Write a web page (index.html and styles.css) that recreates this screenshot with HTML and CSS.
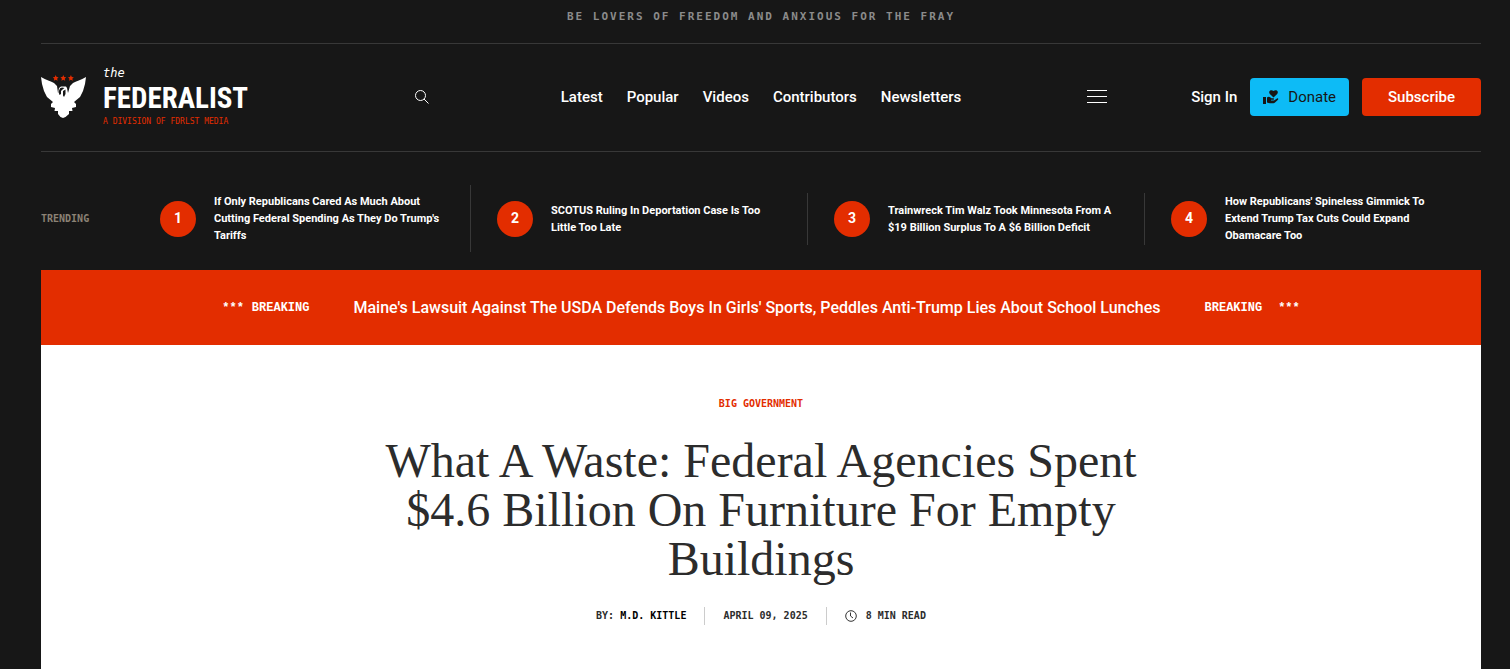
FILE: index.html
```html
<!DOCTYPE html>
<html lang="en">
<head>
<meta charset="utf-8">
<meta name="viewport" content="width=device-width, initial-scale=1">
<title>What A Waste: Federal Agencies Spent $4.6 Billion On Furniture For Empty Buildings</title>
<link rel="stylesheet" href="styles.css">
</head>
<body>
<div class="page">
  <header>
    <p class="tagline">Be lovers of freedom and anxious for the fray</p>
    <div class="masthead">
      <a class="logo" href="#">
        <svg class="logo-eagle" viewBox="0 0 45 46" aria-hidden="true">
          <path fill="#fff" d="M0 3C5 6 10 7 13 9L16 12 17 19 18 14 20 12.500H25L26 14 27 19 29 12 32 9C35 7 40 6 45 3L44 10 42 17 39 23 33 28 35 30V33L31 34 31.500 37 28 37 28 40 24.500 43 22 44 19.500 43 17 40V37H13.500L14 34 10 33V30L12 28 6 23 3 17 1 10Z"/>
          <path fill="#171717" d="M17.500 18 19 14.200 21 13.500 23.500 14 21.500 15.500 20 17 20 20 18.500 21ZM22 17 24.500 15.500 24.500 20 23 23 22 21.500Z"/>
          <path fill="#e32d00" d="m14.700 1 .9 2 2 .2-1.500 1.500.5 2.100-1.900-1.100-1.900 1.100.5-2.100-1.500-1.500 2-.2ZM22.300 1l.9 2 2 .2-1.500 1.500.5 2.100-1.900-1.100-1.900 1.100.5-2.100-1.500-1.500 2-.2ZM29.900 1l.9 2 2 .2-1.500 1.500.5 2.100-1.900-1.100L28 6.800l.5-2.100L27 3.200l2-.2Z"/>
        </svg>
        <span class="logo-words">
          <span class="logo-the">the</span>
          <span class="logo-name">FEDERALIST</span>
          <span class="logo-sub">A DIVISION OF FDRLST MEDIA</span>
        </span>
      </a>
      <div class="masthead-middle">
        <button class="icon-button" aria-label="Search">
          <svg width="14" height="14" viewBox="0 0 14 14" fill="none" stroke="#fff" aria-hidden="true"><circle cx="5.500" cy="5.500" r="5"/><path d="m9 9 4.500 4.500"/></svg>
        </button>
        <nav class="nav">
          <a href="#">Latest</a>
          <a href="#">Popular</a>
          <a href="#">Videos</a>
          <a href="#">Contributors</a>
          <a href="#">Newsletters</a>
        </nav>
        <button class="icon-button" aria-label="Menu">
          <svg width="20" height="13" viewBox="0 0 20 13" fill="#fff" aria-hidden="true"><path d="M0 0h20v1H0ZM0 6h20v1H0ZM0 12h20v1H0Z"/></svg>
        </button>
      </div>
      <div class="account">
        <a class="sign-in" href="#">Sign In</a>
        <a class="button donate" href="#">
          <svg width="16" height="14" viewBox="0 0 16 14" fill="#171717" aria-hidden="true"><path d="M10.500 7.500 6.800 3.900C5.800 2.900 6 1.200 7.200.5c1-.6 2.300-.4 3.300.6 1-1 2.300-1.200 3.300-.6 1.200.7 1.400 2.400.4 3.400ZM0 7h3v7H0ZM4 7.500c1-1 2.500-1 3.500 0l1 .8h1.800c1 0 1 1.500 0 1.500H8v.6h3l3-1.900c.9-.6 1.700.4 1 1.200l-3 2.900c-.4.4-1 .6-1.500.6H7c-1 0-2-.3-3-.8Z"/></svg>
          Donate
        </a>
        <a class="button subscribe" href="#">Subscribe</a>
      </div>
    </div>
    <section class="trending" aria-labelledby="trending-label">
      <h2 class="trending-label" id="trending-label">Trending</h2>
      <a class="trend trend-first" href="#"><span class="trend-number">1</span><span>If Only Republicans Cared As Much About Cutting Federal Spending As They Do Trump's Tariffs</span></a>
      <a class="trend" href="#"><span class="trend-number">2</span><span>SCOTUS Ruling In Deportation Case Is Too Little Too Late</span></a>
      <a class="trend" href="#"><span class="trend-number">3</span><span>Trainwreck Tim Walz Took Minnesota From A $19 Billion Surplus To A $6 Billion Deficit</span></a>
      <a class="trend" href="#"><span class="trend-number">4</span><span>How Republicans' Spineless Gimmick To Extend Trump Tax Cuts Could Expand Obamacare Too</span></a>
    </section>
  </header>
  <a class="breaking" href="#">
    <span class="breaking-flag"><span>***</span><span>Breaking</span></span>
    <span class="breaking-title">Maine's Lawsuit Against The USDA Defends Boys In Girls' Sports, Peddles Anti-Trump Lies About School Lunches</span>
    <span class="breaking-flag breaking-flag-end"><span>Breaking</span><span>***</span></span>
  </a>
  <main class="article">
    <a class="category" href="#">Big Government</a>
    <h1 class="title">What A Waste: Federal Agencies Spent $4.6 Billion On Furniture For Empty Buildings</h1>
    <div class="meta">
      <span class="meta-item">By: <a class="author" href="#">M.D. Kittle</a></span>
      <time class="meta-item" datetime="2025-04-09">April 09, 2025</time>
      <span class="meta-item meta-read">
        <svg width="12" height="12" viewBox="0 0 12 12" fill="none" stroke="#333" aria-hidden="true"><circle cx="6" cy="6" r="5.300"/><path d="M5.500 2.500V6l2.500 2"/></svg>
        8 min read
      </span>
    </div>
  </main>
</div>
</body>
</html>
```
FILE: styles.css
```css
* { box-sizing: border-box; }

body {
  margin: 0;
  background: #171717;
  color: #fff;
  font-family: Roboto, "Liberation Sans", sans-serif;
}

a { color: inherit; text-decoration: none; }

.page {
  display: flex;
  flex-direction: column;
  min-height: 100vh;
  padding: 0 29px 0 41px;
}

.tagline {
  margin: 0;
  padding: 9px 0 18px;
  border-bottom: 1px solid #383838;
  color: #8b8b8b;
  font: bold 11px/16px "DejaVu Sans Mono", monospace;
  letter-spacing: 2px;
  text-align: center;
  text-transform: uppercase;
}

.masthead {
  display: grid;
  grid-template-columns: 26% 1fr 26%;
  align-items: center;
  min-height: 108px;
  padding-bottom: 2px;
  border-bottom: 1px solid #383838;
}

.logo { display: flex; align-items: center; gap: 17px; }
.logo-eagle { width: 45px; height: 46px; }
.logo-words { display: flex; flex-direction: column; }
.logo-the { font: italic 12px/14px "DejaVu Sans Mono", monospace; }
.logo-name { font: bold 29px/36px "Liberation Sans Narrow", "Roboto Condensed", sans-serif; }
.logo-sub { color: #e32d00; font: 8px/12px "DejaVu Sans Mono", monospace; }

.masthead-middle { display: flex; align-items: center; justify-content: space-between; }
.icon-button {
  display: flex;
  min-width: 20px;
  padding: 0;
  border: 0;
  background: none;
  cursor: pointer;
}
.nav { display: flex; gap: 24px; font-size: 15px; font-weight: 500; line-height: 20px; }

.account {
  display: flex;
  align-items: center;
  justify-content: flex-end;
  gap: 13px;
  font-size: 15px;
  font-weight: 500;
  line-height: 20px;
}
.button {
  display: flex;
  align-items: center;
  justify-content: center;
  gap: 9px;
  padding: 9px 13px;
  border-radius: 4px;
}
.donate { background: #0dbbf6; color: #171717; font-weight: 400; }
.subscribe { padding: 9px 26px; background: #e32d00; }

.trending {
  display: flex;
  align-items: center;
  padding: 33px 0 18px;
}
.trending-label {
  flex: 0 0 119px;
  margin: 0;
  color: #8b8275;
  font: bold 10px/16px "DejaVu Sans Mono", monospace;
  text-transform: uppercase;
}
.trend {
  display: flex;
  flex: 1 1 26px;
  align-items: center;
  gap: 18px;
  padding: 8px 26px;
  border-right: 1px solid #383838;
  font-size: 11px;
  font-weight: 700;
  line-height: 17px;
}
.trend-first { flex-basis: 0; padding-left: 0; }
.trend:last-child { border-right: 0; }
.trend-number {
  display: grid;
  flex: 0 0 36px;
  place-items: center;
  height: 36px;
  border-radius: 50%;
  background: #e32d00;
  font-size: 14px;
}

.breaking {
  display: flex;
  align-items: center;
  justify-content: center;
  gap: 44px;
  min-height: 75px;
  background: #e32d00;
}
.breaking-flag {
  display: flex;
  gap: 8px;
  font: bold 12px/16px "Liberation Mono", monospace;
  text-transform: uppercase;
}
.breaking-flag-end { gap: 16px; }
.breaking-title { font-size: 16px; font-weight: 500; line-height: 20px; }

.article {
  display: flex;
  flex: 1;
  flex-direction: column;
  align-items: center;
  padding: 51px 24px 32px;
  background: #fff;
  color: #2c2c2c;
}
.category {
  color: #e32d00;
  font: bold 10px/16px "DejaVu Sans Mono", monospace;
  text-transform: uppercase;
}
.title {
  max-width: 780px;
  margin: 24px 0;
  font: 400 48px/49px "Liberation Serif", serif;
  text-align: center;
}
.meta {
  display: flex;
  font: bold 10px/18px "DejaVu Sans Mono", monospace;
  text-transform: uppercase;
}
.meta-item { padding: 0 18px; border-right: 1px solid #ccc; }
.meta-item:last-child { border-right: 0; }
.meta-read { display: flex; align-items: center; gap: 9px; }
.author { color: #000; }
```
